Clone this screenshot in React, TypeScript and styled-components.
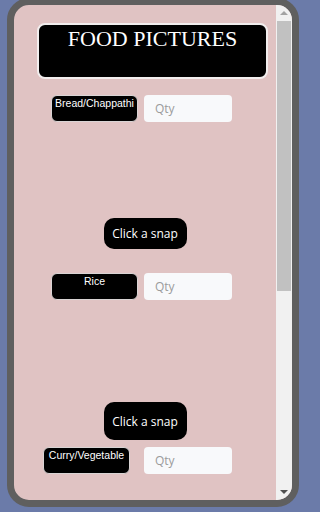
import styled, { createGlobalStyle } from 'styled-components'

const GlobalStyle = createGlobalStyle`
  html, body {
    margin: 0;
    padding: 0;
    background: #6b7ba9;
    overflow: hidden;
  }
`

const Frame = styled.div`
  box-sizing: border-box;
  display: flex;
  margin: -2px 0 0 7px;
  width: 292px;
  height: 509px;
  border: 7px solid #5f5f5f;
  border-radius: 22px;
  background: #e0c3c3;
  overflow: hidden;
`

const Viewport = styled.div`
  flex: 1;
  overflow: hidden;
`

const Content = styled.div`
  display: flex;
  flex-direction: column;
  padding-top: 18px;
`

const ScrollBar = styled.div`
  width: 16px;
  display: flex;
  flex-direction: column;
  background: #f1f1f1;
`

const Arrow = styled.div<{ $down?: boolean }>`
  height: 16px;
  display: flex;
  align-items: center;
  justify-content: center;
  &::after {
    content: '';
    width: 0;
    height: 0;
    border-left: 4px solid transparent;
    border-right: 4px solid transparent;
    ${p =>
      p.$down
        ? 'border-top: 4px solid #505050;'
        : 'border-bottom: 4px solid #a3a3a3;'}
  }
`

const Track = styled.div`
  flex: 1;
  padding: 0 1px;
`

const Thumb = styled.div`
  height: 270px;
  background: #c1c1c1;
`

const Title = styled.div`
  box-sizing: border-box;
  margin-left: 23px;
  width: 231px;
  height: 56px;
  background: #000;
  border: 2px solid #f2eeee;
  border-radius: 8px;
  color: #fff;
  text-align: center;
  font-family: 'Liberation Serif', serif;
  font-size: 22px;
  line-height: 25px;
  padding-top: 1px;
`

const Row = styled.div<{ $top: number; $left: number; $gap: number }>`
  display: flex;
  gap: ${p => p.$gap}px;
  margin-top: ${p => p.$top}px;
  padding-left: ${p => p.$left}px;
`

const FoodLabel = styled.div`
  box-sizing: border-box;
  width: 87px;
  height: 27px;
  background: #000;
  border: 1px solid #d9d4d4;
  border-radius: 6px;
  color: #fff;
  text-align: center;
  font-family: 'Liberation Sans', Arial, sans-serif;
  font-size: 10.5px;
  line-height: 12px;
  padding-top: 1px;
  white-space: nowrap;
`

const QtyInput = styled.input`
  box-sizing: border-box;
  width: 88px;
  height: 27px;
  border: none;
  border-radius: 4px;
  background: #f8f9fb;
  padding: 0 0 0 11px;
  font-family: 'Open Sans', sans-serif;
  font-size: 12px;
  outline: none;
  &::placeholder {
    color: #9b9b9b;
  }
`

const SnapButton = styled.button<{ $top: number; $height: number }>`
  align-self: center;
  margin-top: ${p => p.$top}px;
  width: 83px;
  height: ${p => p.$height}px;
  border: none;
  border-radius: 10px;
  background: #000;
  color: #fff;
  font-family: 'Open Sans', sans-serif;
  font-size: 12px;
  padding: 0;
`

const App = () => {
  return (
    <>
      <GlobalStyle />
      <Frame>
        <Viewport>
          <Content>
            <Title>FOOD PICTURES</Title>

            <Row $top={16} $left={37} $gap={6}>
              <FoodLabel>Bread/Chappathi</FoodLabel>
              <QtyInput placeholder="Qty" />
            </Row>
            <SnapButton $top={96} $height={31}>Click a snap</SnapButton>

            <Row $top={24} $left={37} $gap={6}>
              <FoodLabel>Rice</FoodLabel>
              <QtyInput placeholder="Qty" />
            </Row>
            <SnapButton $top={102} $height={38}>Click a snap</SnapButton>

            <Row $top={7} $left={29} $gap={14}>
              <FoodLabel>Curry/Vegetable</FoodLabel>
              <QtyInput placeholder="Qty" />
            </Row>
          </Content>
        </Viewport>
        <ScrollBar>
          <Arrow />
          <Track>
            <Thumb />
          </Track>
          <Arrow $down />
        </ScrollBar>
      </Frame>
    </>
  )
}

export default App
